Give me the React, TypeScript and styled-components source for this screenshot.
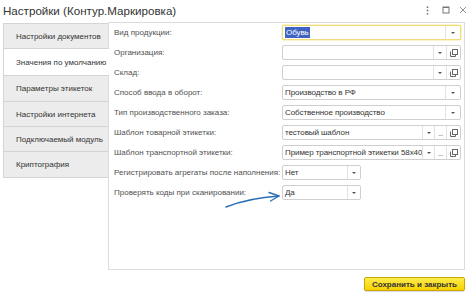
import React from 'react';
import styled, { createGlobalStyle } from 'styled-components';

const GlobalStyle = createGlobalStyle`
  html, body {
    margin: 0;
    padding: 0;
    background: #ffffff;
  }
  body {
    font-family: "Liberation Sans", Arial, sans-serif;
    color: #333;
  }
`;

const Window = styled.div`
  width: 474px;
  height: 298px;
  display: flex;
  flex-direction: column;
  overflow: hidden;
  background: #fff;
`;

const TitleBar = styled.div`
  height: 22px;
  display: flex;
  align-items: center;
  padding: 0 7px 2px 3px;
  box-sizing: border-box;
`;

const Title = styled.div`
  font-size: 11.6px;
  color: #333;
`;

const WinButtons = styled.div`
  margin-left: auto;
  display: flex;
  align-items: center;
  color: #777;
`;

const WinIcon = styled.svg<{ $gap?: number }>`
  display: block;
  margin-left: ${(p) => p.$gap ?? 0}px;
`;

const Body = styled.div`
  display: flex;
  padding-left: 3px;
  height: 248px;
`;

const Tabs = styled.div`
  width: 105px;
  padding-top: 1px;
  display: flex;
  flex-direction: column;
  position: relative;
  z-index: 1;
`;

const Tab = styled.div<{ $active?: boolean; $h: number }>`
  height: ${(p) => p.$h}px;
  box-sizing: border-box;
  display: flex;
  align-items: center;
  padding-left: 12px;
  font-size: 8px;
  color: #333;
  white-space: nowrap;
  border-left: 1px solid #d4d4d4;
  border-bottom: 1px solid #d4d4d4;
  &:first-child {
    border-top: 1px solid #d4d4d4;
  }
  background: ${(p) => (p.$active ? '#ffffff' : '#ececec')};
  margin-right: ${(p) => (p.$active ? '-1px' : '0')};
`;

const Panel = styled.div`
  position: relative;
  width: 357px;
  box-sizing: border-box;
  border: 1px solid #dcdcdc;
  padding: 2px 0 0 5px;
  display: flex;
  flex-direction: column;
  gap: 5px;
`;

const Row = styled.div`
  display: flex;
  align-items: center;
  height: 15px;
`;

const Label = styled.div`
  width: 168px;
  font-size: 8px;
  color: #505050;
  white-space: nowrap;
  overflow: hidden;
`;

const Field = styled.div<{ $width: number; $focused?: boolean }>`
  width: ${(p) => p.$width}px;
  height: 15px;
  box-sizing: border-box;
  display: flex;
  border: 1px solid ${(p) => (p.$focused ? '#f0dc78' : '#cfcfcf')};
  border-radius: 2px;
  background: #fff;
  box-shadow: ${(p) => (p.$focused ? '0 0 0 0.5px #f5e79a' : 'none')};
`;

const FieldText = styled.div`
  flex: 1;
  min-width: 0;
  display: flex;
  align-items: center;
  padding-left: 2px;
  font-size: 8px;
  letter-spacing: -0.08px;
  color: #333;
  white-space: nowrap;
  overflow: hidden;
`;

const Selected = styled.span`
  background: #3f63c2;
  color: #ffffff;
  padding: 1px 1px;
`;

const Btn = styled.div<{ $w?: number }>`
  width: ${(p) => p.$w ?? 12}px;
  flex: none;
  display: flex;
  align-items: center;
  justify-content: center;
  border-left: 1px solid #e2e2e2;
`;

const Caret = styled.span`
  width: 0;
  height: 0;
  border-left: 2px solid transparent;
  border-right: 2px solid transparent;
  border-top: 2px solid #555;
`;

const Dots = styled.span`
  font-size: 7px;
  color: #555;
  line-height: 1;
  margin-top: 1px;
  letter-spacing: -0.5px;
`;

const Footer = styled.div`
  display: flex;
  justify-content: flex-end;
  padding: 7px 9px 0 0;
`;

const SaveButton = styled.button`
  width: 101px;
  height: 14px;
  padding: 0;
  box-sizing: border-box;
  border: 1px solid #c9a600;
  border-radius: 2px;
  background: linear-gradient(#ffec4d, #f6d200);
  font-family: "Liberation Sans", Arial, sans-serif;
  font-size: 8px;
  font-weight: bold;
  color: #333;
  box-shadow: 0 1px 1px rgba(0, 0, 0, 0.15);
`;

const Pointer = styled.svg`
  position: absolute;
  left: 110px;
  top: 164px;
`;

function CopyIcon() {
  return (
    <svg width="8" height="8" viewBox="0 0 8 8">
      <rect x="2.5" y="0.5" width="5" height="5" fill="none" stroke="#666" strokeWidth="1" />
      <path d="M0.5 2.5 V7.5 H5.5 V5.5" fill="none" stroke="#666" strokeWidth="1" />
    </svg>
  );
}

type Kind = 'plain' | 'copy' | 'full';

interface FieldRow {
  label: string;
  value?: string;
  kind: Kind;
  width: number;
  focused?: boolean;
}

const rows: FieldRow[] = [
  { label: 'Вид продукции:', value: 'Обувь', kind: 'plain', width: 179, focused: true },
  { label: 'Организация:', kind: 'copy', width: 179 },
  { label: 'Склад:', kind: 'copy', width: 179 },
  { label: 'Способ ввода в оборот:', value: 'Производство в РФ', kind: 'plain', width: 179 },
  { label: 'Тип производственного заказа:', value: 'Собственное производство', kind: 'plain', width: 179 },
  { label: 'Шаблон товарной этикетки:', value: 'тестовый шаблон', kind: 'full', width: 179 },
  { label: 'Шаблон транспортной этикетки:', value: 'Пример транспортной этикетки 58x40', kind: 'full', width: 179 },
  { label: 'Регистрировать агрегаты после наполнения:', value: 'Нет', kind: 'plain', width: 79 },
  { label: 'Проверять коды при сканировании:', value: 'Да', kind: 'plain', width: 79 },
];

const tabs = [
  { text: 'Настройки документов', h: 26 },
  { text: 'Значения по умолчанию', h: 27, active: true },
  { text: 'Параметры этикеток', h: 26 },
  { text: 'Настройки интернета', h: 25 },
  { text: 'Подключаемый модуль', h: 25 },
  { text: 'Криптография', h: 26 },
];

export default function App() {
  return (
    <Window>
      <GlobalStyle />
      <TitleBar>
        <Title>Настройки (Контур.Маркировка)</Title>
        <WinButtons>
          <WinIcon width="3" height="9" viewBox="0 0 3 9">
            <circle cx="1.5" cy="1.2" r="0.9" fill="#777" />
            <circle cx="1.5" cy="4.5" r="0.9" fill="#777" />
            <circle cx="1.5" cy="7.8" r="0.9" fill="#777" />
          </WinIcon>
          <WinIcon $gap={13} width="8" height="8" viewBox="0 0 8 8">
            <rect x="1" y="1" width="6" height="6" fill="none" stroke="#777" strokeWidth="1" />
            <line x1="1" y1="1.5" x2="7" y2="1.5" stroke="#777" strokeWidth="1" />
          </WinIcon>
          <WinIcon $gap={9} width="8" height="8" viewBox="0 0 8 8">
            <path d="M1 1 L7 7 M7 1 L1 7" stroke="#888" strokeWidth="0.9" />
          </WinIcon>
        </WinButtons>
      </TitleBar>
      <Body>
        <Tabs>
          {tabs.map((t) => (
            <Tab key={t.text} $active={t.active} $h={t.h}>
              {t.text}
            </Tab>
          ))}
        </Tabs>
        <Panel>
          {rows.map((r) => (
            <Row key={r.label}>
              <Label>{r.label}</Label>
              <Field $width={r.width} $focused={r.focused}>
                <FieldText>{r.focused ? <Selected>{r.value}</Selected> : r.value}</FieldText>
                <Btn $w={r.kind === 'plain' && r.width > 100 ? 14 : r.kind === 'full' ? 11 : 12}>
                  <Caret />
                </Btn>
                {r.kind === 'full' && (
                  <Btn $w={11}>
                    <Dots>...</Dots>
                  </Btn>
                )}
                {r.kind !== 'plain' && (
                  <Btn $w={13}>
                    <CopyIcon />
                  </Btn>
                )}
              </Field>
            </Row>
          ))}
          <Pointer width="66" height="26" viewBox="0 0 66 26">
            <path d="M7 20 Q30 11 60 9" fill="none" stroke="#2d6fb6" strokeWidth="1.4" strokeLinecap="round" />
            <path d="M50 5.5 L60 9 L51.5 14" fill="none" stroke="#2d6fb6" strokeWidth="1.4" strokeLinecap="round" strokeLinejoin="round" />
          </Pointer>
        </Panel>
      </Body>
      <Footer>
        <SaveButton>Сохранить и закрыть</SaveButton>
      </Footer>
    </Window>
  );
}
